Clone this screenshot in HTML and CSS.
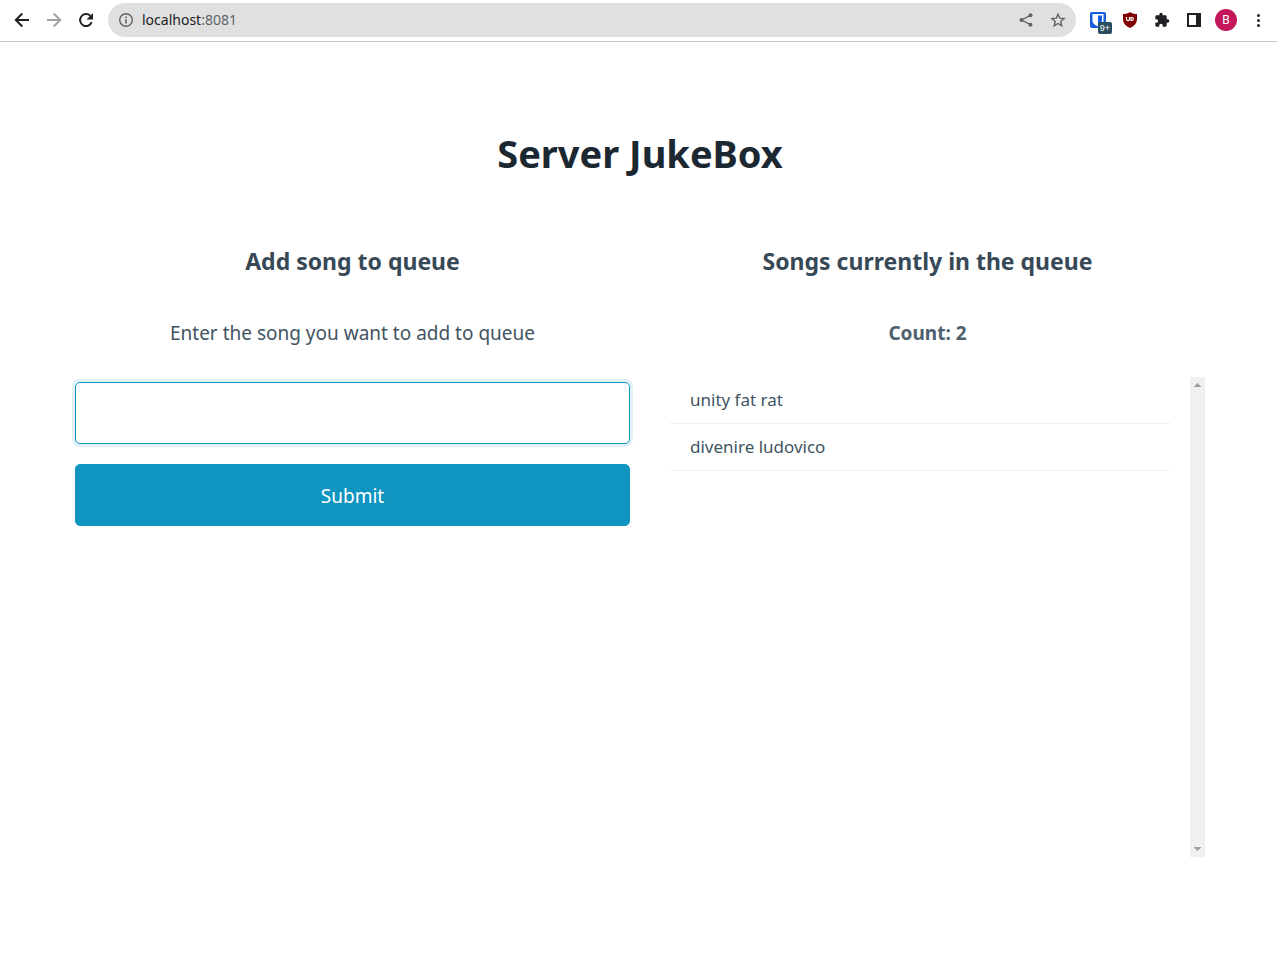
FILE: index.html
```html
<!DOCTYPE html>
<html lang="en">
<head>
<meta charset="utf-8">
<title>Server JukeBox</title>
<link rel="stylesheet" href="styles.css">
</head>
<body>
<header class="toolbar">
  <button class="tool" aria-label="Back"><svg class="icon" viewBox="0 0 16 16"><path d="M15 8H2M8.300 1.500 1.800 8l6.500 6.500" fill="none" stroke="#202124" stroke-width="2"/></svg></button>
  <button class="tool" aria-label="Forward"><svg class="icon" viewBox="0 0 16 16"><path d="M1 8h13M7.700 1.500 14.200 8l-6.500 6.500" fill="none" stroke="#a0a1a3" stroke-width="2"/></svg></button>
  <button class="tool" aria-label="Reload"><svg class="icon" viewBox="0 0 16 16"><path d="M13.700 10.200A6 6 0 1 1 12.300 3.800" fill="none" stroke="#202124" stroke-width="2"/><path d="M15 1v6.500H8.500z" fill="#202124"/></svg></button>
  <div class="address">
    <svg class="icon" viewBox="0 0 16 16"><circle cx="8" cy="8" r="6.300" fill="none" stroke="#5f6368" stroke-width="1.400"/><path d="M7.200 7.200h1.600v4.300H7.200zM7.200 4.500h1.600v1.600H7.200z" fill="#5f6368"/></svg>
    <span class="url">localhost<span class="port">:8081</span></span>
    <button class="tool" aria-label="Share"><svg class="icon" viewBox="0 0 16 16"><path d="M12.500 3.300 3.500 8l9 4.700" fill="none" stroke="#5f6368" stroke-width="1.300"/><g fill="#5f6368"><circle cx="12.500" cy="3.200" r="2"/><circle cx="3.500" cy="8" r="2"/><circle cx="12.500" cy="12.800" r="2"/></g></svg></button>
    <button class="tool" aria-label="Bookmark"><svg class="icon" viewBox="0 0 16 16"><path d="m8 2.200 1.700 4 4.400.400-3.300 2.900 1 4.300L8 11.500l-3.800 2.300 1-4.300L1.900 6.600l4.400-.400z" fill="none" stroke="#5f6368" stroke-width="1.400"/></svg></button>
  </div>
  <button class="tool vault" aria-label="Password manager"><svg class="icon" viewBox="0 0 16 16"><rect width="16" height="16" rx="2" fill="#175ddc"/><path d="M2.500 2h11v6.500c0 3-2.500 4.500-5.500 6-3-1.500-5.500-3-5.500-6z" fill="#fff"/><path d="M8 3.500h4v5c0 2-2 3.200-4 4.200z" fill="#175ddc"/></svg><span class="count">9+</span></button>
  <button class="tool" aria-label="Content blocker"><svg class="icon" viewBox="0 0 16 16"><path d="M8 0c2 1.500 4 2 7 2v5c0 4.500-3 7-7 9-4-2-7-4.500-7-9V2c3 0 5-.500 7-2z" fill="#800000"/><path d="M4.500 5v2.200a1.500 1.500 0 0 0 3 0V5M9 5.500v3h.800a1.500 1.500 0 0 0 0-3z" fill="none" stroke="#fff" stroke-width="1.200"/></svg></button>
  <button class="tool" aria-label="Extensions"><svg class="icon" viewBox="0 0 24 24"><path d="M20.500 11H19V7c0-1.100-.900-2-2-2h-4V3.500a2.500 2.500 0 0 0-5 0V5H4c-1.100 0-2 .900-2 2v3.800h1.500a2.700 2.700 0 0 1 0 5.400H2V20c0 1.100.900 2 2 2h3.800v-1.500a2.700 2.700 0 0 1 5.400 0V22H17c1.100 0 2-.900 2-2v-4h1.500a2.500 2.500 0 0 0 0-5z" fill="#202124"/></svg></button>
  <button class="tool" aria-label="Side panel"><svg class="icon" viewBox="0 0 16 16"><path d="M1 1h14v14H1zM3 3v10h7V3z" fill="#202124" fill-rule="evenodd"/></svg></button>
  <button class="tool" aria-label="Profile"><span class="avatar">B</span></button>
  <button class="tool" aria-label="Menu"><svg class="icon" viewBox="0 0 16 16"><g fill="#202124"><circle cx="8.500" cy="3.500" r="1.500"/><circle cx="8.500" cy="8.500" r="1.500"/><circle cx="8.500" cy="13.500" r="1.500"/></g></svg></button>
</header>
<main class="container">
  <h1 class="title">Server JukeBox</h1>
  <div class="grid">
    <section class="column">
      <h2 class="heading">Add song to queue</h2>
      <form class="form">
        <label class="lead" for="song">Enter the song you want to add to queue</label>
        <input class="field" id="song" type="text">
        <button class="submit" type="submit">Submit</button>
      </form>
    </section>
    <section class="column">
      <h2 class="heading">Songs currently in the queue</h2>
      <p class="lead strong">Count: 2</p>
      <div class="queue">
        <ul class="songs">
          <li class="song">unity fat rat</li>
          <li class="song">divenire ludovico</li>
        </ul>
        <div class="scrollbar">
          <svg class="arrow" viewBox="0 0 7 4" shape-rendering="crispEdges"><path d="M3 0h1v1h1v1h1v1h1v1H0V3h1V2h1V1h1z" fill="#a0a0a0"/></svg>
          <svg class="arrow" viewBox="0 0 7 4" shape-rendering="crispEdges"><path d="M0 0h7v1H6v1H5v1H4v1H3V3H2V2H1V1H0z" fill="#a0a0a0"/></svg>
        </div>
      </div>
    </section>
  </div>
</main>
</body>
</html>
```
FILE: styles.css
```css
* { box-sizing: border-box; }
body {
  margin: 0;
  background: #fff;
  color: #415462;
  font: 19px/30px "Noto Sans", sans-serif;
}
.toolbar {
  display: flex;
  align-items: center;
  height: 42px;
  padding: 0 3px 2px 6px;
  border-bottom: 1px solid #c8c8c8;
}
.tool {
  display: flex;
  flex: none;
  align-items: center;
  justify-content: center;
  width: 32px;
  height: 32px;
  padding: 0;
  border: 0;
  background: none;
}
.icon { flex: none; width: 16px; height: 16px; }
.address {
  display: flex;
  flex: 1;
  align-items: center;
  height: 34px;
  margin: 0 6px;
  padding: 0 2px 0 10px;
  border-radius: 17px;
  background: #e0e0e0;
}
.url {
  flex: 1;
  margin-left: 8px;
  color: #202124;
  font-size: 14px;
  line-height: 20px;
}
.port { color: #5f6368; }
.vault { position: relative; }
.count {
  position: absolute;
  right: 2px;
  bottom: 2px;
  width: 14px;
  height: 12px;
  border-radius: 2px;
  background: #294e5f;
  color: #fff;
  font-size: 9px;
  line-height: 12px;
}
.avatar {
  width: 22px;
  height: 22px;
  border-radius: 50%;
  background: #c2185b;
  color: #fff;
  font: 12px/22px Roboto, sans-serif;
}
.container { padding: 81px 72px 95px 75px; text-align: center; }
.title {
  margin: 0 0 60px;
  color: #1b2832;
  font-size: 38px;
  line-height: 60px;
}
.grid { display: grid; grid-template-columns: 1fr 1fr; gap: 20px; }
.heading {
  margin: 0 0 39px;
  color: #374956;
  font-size: 23px;
  line-height: 36px;
}
.form { display: flex; flex-direction: column; }
.lead { margin: 0 0 29px; line-height: 30px; }
.strong { color: #4d606d; font-weight: 700; }
.field, .submit {
  width: 100%;
  height: 62px;
  border: 1px solid #1095c1;
  border-radius: 5px;
  font: inherit;
}
.field {
  margin: 5px 0 20px;
  padding: 0 20px;
  background: #fff;
  outline: 0;
  box-shadow: 0 0 0 3px #dff0f6;
}
.submit { padding-top: 3px; background: #1095c1; color: #fff; }
.queue { display: flex; height: 480px; }
.songs {
  flex: 1;
  margin: 0;
  padding: 0 20px;
  list-style: none;
  text-align: left;
}
.song {
  padding: 8px 20px;
  border-bottom: 1px solid #edf0f3;
  font-size: 17px;
}
.scrollbar {
  display: flex;
  flex-direction: column;
  align-items: center;
  justify-content: space-between;
  width: 15px;
  padding: 6px 0;
  background: #f0f0f0;
}
.arrow { width: 7px; height: 4px; }
```
